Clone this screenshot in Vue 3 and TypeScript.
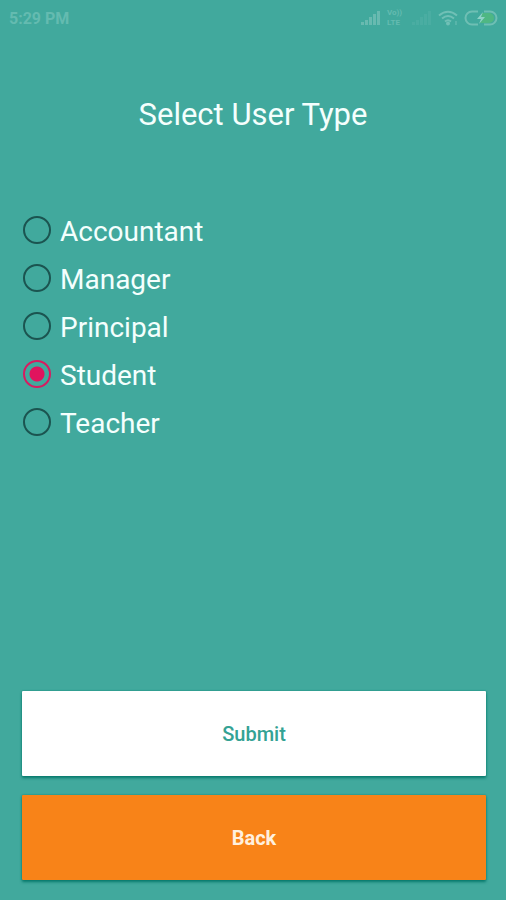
<script setup lang="ts">
import { ref } from 'vue'

const userTypes: string[] = ['Accountant', 'Manager', 'Principal', 'Student', 'Teacher']
const selected = ref<string>('Student')
</script>

<template>
  <div class="screen">
    <header class="status-bar">
      <span class="clock">5:29 PM</span>
      <div class="indicators">
        <svg class="signal" width="20" height="16" viewBox="0 0 20 16" aria-hidden="true">
          <path d="M0 12h3v3H0zM4 10h3v5H4zM8 7h3v8H8zM12 4h3v11h-3zM16 1h3v14h-3z" />
        </svg>
        <span class="volte"><span>Vo))</span><span>LTE</span></span>
        <svg class="signal faint" width="20" height="16" viewBox="0 0 20 16" aria-hidden="true">
          <path d="M0 12h3v3H0zM4 10h3v5H4zM8 7h3v8H8zM12 4h3v11h-3zM16 1h3v14h-3z" />
        </svg>
        <svg class="wifi" width="20" height="16" viewBox="0 0 20 16" aria-hidden="true">
          <path d="M1 5.500Q10 -2 19 5.500M4 8.500Q10 3.500 16 8.500M7 11.500Q10 9 13 11.500" />
          <circle cx="10" cy="13.500" r="1" />
          <path class="thin" d="M18 11v4" />
        </svg>
        <svg class="battery" width="34" height="16" viewBox="0 0 34 16" aria-hidden="true">
          <path class="charge" d="M18 3h7a5 5 0 0 1 0 10h-9z" />
          <path class="case" d="M14 1.500H8a6.500 6.500 0 0 0 0 13h6M20 1.500h6a6.500 6.500 0 0 1 0 13h-6" />
          <path class="bolt" d="M19 2l-6 7h4l-2 5 6-7h-4z" />
        </svg>
      </div>
    </header>

    <main class="content">
      <h1 class="title">Select User Type</h1>

      <form class="form" @submit.prevent>
        <div class="options" role="radiogroup" aria-label="Select User Type">
          <label v-for="type in userTypes" :key="type" class="option">
            <input v-model="selected" class="radio" type="radio" name="user-type" :value="type" />
            <span class="option-text">{{ type }}</span>
          </label>
        </div>

        <div class="actions">
          <button class="button submit" type="submit">Submit</button>
          <button class="button back" type="button">Back</button>
        </div>
      </form>
    </main>
  </div>
</template>

<style>
body {
  background: #41a99d;
}
</style>

<style scoped>
.screen {
  box-sizing: border-box;
  min-height: 100vh;
  display: flex;
  flex-direction: column;
  background: #41a99d;
  color: #f4fffd;
  font-family: Roboto, "Liberation Sans", sans-serif;
}

.status-bar {
  display: flex;
  align-items: center;
  justify-content: space-between;
  height: 36px;
  padding: 0 8px 0 9px;
  color: #64bbb0;
}

.clock {
  font-size: 16px;
  font-weight: 700;
}

.indicators {
  display: flex;
  align-items: center;
  gap: 6px;
}

.volte {
  display: flex;
  flex-direction: column;
  width: 19px;
  font-size: 8px;
  font-weight: 700;
  line-height: 10px;
}

.signal {
  fill: #68bab0;
}

.faint {
  fill: #4aada2;
}

.wifi {
  fill: #70c0b6;
  stroke: #70c0b6;
  stroke-width: 2;
}

.wifi path {
  fill: none;
}

.wifi .thin {
  stroke-width: 1;
}

.battery .case {
  fill: none;
  stroke: #6fbfb4;
  stroke-width: 2;
}

.battery .charge {
  fill: #4fb783;
}

.battery .bolt {
  fill: #8ed2c7;
}

.content {
  flex: 1;
  display: flex;
  flex-direction: column;
  padding: 58px 20px 20px;
}

.title {
  margin: 0;
  font-size: 31px;
  font-weight: 400;
  line-height: 42px;
  text-align: center;
}

.form {
  flex: 1;
  display: flex;
  flex-direction: column;
  justify-content: space-between;
  padding-top: 70px;
}

.options {
  display: flex;
  flex-direction: column;
}

.option {
  display: flex;
  align-items: center;
  gap: 9px;
  height: 48px;
  padding-left: 3px;
  font-size: 28px;
  cursor: pointer;
}

.option-text {
  padding-top: 2px;
}

.radio {
  appearance: none;
  box-sizing: border-box;
  width: 28px;
  height: 28px;
  margin: 0;
  border: 2px solid #1b5450;
  border-radius: 50%;
}

.radio:checked {
  border-color: #d81b60;
  background: radial-gradient(circle, #e0145e 7px, transparent 8px);
}

.actions {
  display: flex;
  flex-direction: column;
  gap: 19px;
  padding: 0 0 0 2px;
}

.button {
  height: 85px;
  padding: 0;
  border: 0;
  border-radius: 1px;
  box-shadow: 0 2px 3px #08796c, 0 0 2px #128b7c;
  font-family: inherit;
  font-size: 20px;
  cursor: pointer;
}

.submit {
  background: #ffffff;
  color: #34a294;
  font-weight: 500;
}

.back {
  background: #f88318;
  color: #fff0df;
  font-weight: 700;
}
</style>
